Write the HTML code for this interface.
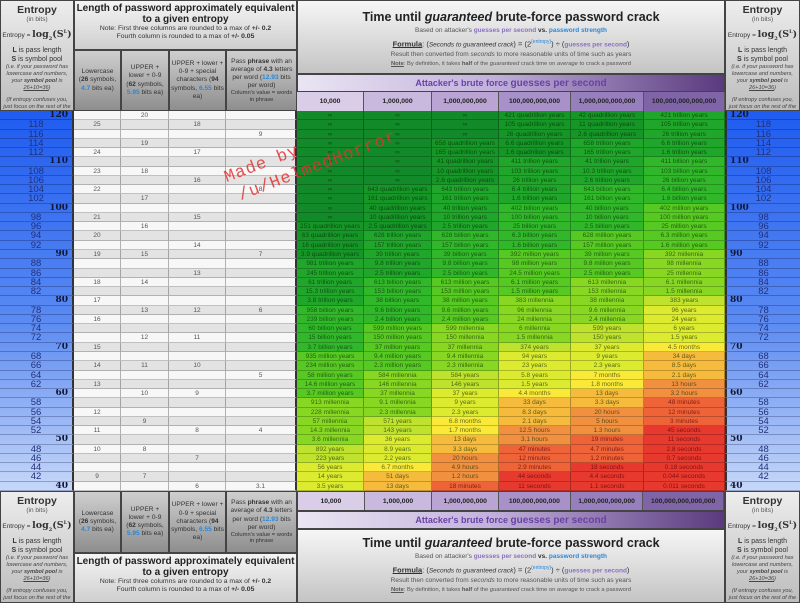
<!DOCTYPE html>
<html><head><meta charset="utf-8"><style>
*{margin:0;padding:0;box-sizing:border-box}
body{width:800px;height:603px;overflow:hidden;background:#555;font-family:"Liberation Sans","DejaVu Sans",sans-serif;position:relative;color:#222}
.abs{position:absolute;overflow:hidden}
#grid{position:absolute;left:0;top:111px;width:800px;height:380px;display:grid;grid-template-columns:74px 47px 48px 57px 71px 67px 68px 67px 72px 73px 81px 75px;grid-template-rows:repeat(41,1fr)}
#grid div{font-size:6.5px;text-align:center;line-height:9px;white-space:nowrap;overflow:hidden;border-right:1px solid rgba(0,0,0,.28);border-bottom:1px solid rgba(0,0,0,.22);color:rgba(0,30,0,.62)}
#grid .e{font-size:9.5px;color:#20307a;background:transparent;border-right:2px solid #333;border-bottom:1px solid rgba(0,0,40,.25);line-height:9px}
#grid .r{border-left:2px solid #333;border-right:none}
#grid .eb{font-weight:bold;text-align:right;padding-right:4px;color:#111838;font-family:"DejaVu Serif",serif;font-size:9px}
#grid .r.eb{text-align:left;padding-left:3px}
#grid .a{background:#f7f7f7;color:#555}
#grid .b{background:#e3e3e3;color:#555}
#grid .p4{border-right:2px solid #333}
.i{background:#138a2a}.q{background:#179628}.t{background:#20a62a}.bi{background:#31b82a}.m{background:#56c922}.k{background:#88d823}.y3{background:#bfe22e}.y{background:#dcea30}.mo{background:#fbe93a}.d{background:#f6bb3c}.h{background:#f19140}.mi{background:#ee6338}.s{background:#e8392f}
#grid .mi,#grid .s{color:rgba(90,0,0,.7)}
#lg,#rg{position:absolute;top:111px;width:74px;height:380px;background:linear-gradient(#1f5cf0,#5a8af2 55%,#c6d7f8)}
#lg{left:0}#rg{left:725px;width:75px}
.ent{background:linear-gradient(#ededed,#bdbdbd);text-align:center;color:#333;border:1px solid #444}
.ent h3{font-size:10.5px;margin-top:3px;line-height:12px}
.ent .s1{font-size:6.5px;color:#555;line-height:8px}
.ent .f{font-size:6.5px;margin-top:2px;line-height:12px}
.ent .f b{font-size:9.5px;font-family:"DejaVu Serif",serif}
.ent .l{font-size:7px;margin-top:1px;line-height:9px}
.ent .it{font-size:5.6px;font-style:italic;line-height:7px;color:#444;padding:0 1px}
.pt{background:linear-gradient(#f4f4f4,#cfcfcf);text-align:center;border:1px solid #444}
.pt h2{font-size:10px;line-height:10.5px;margin-top:3px;color:#222}
.pt p{font-size:6.8px;line-height:8px;color:#333}
.ph{background:linear-gradient(#cfcfcf,#8e8e8e);text-align:center;font-size:6.6px;line-height:8.2px;color:#333;border:1px solid #444;display:flex;align-items:center;justify-content:center;flex-direction:column;padding:0 1px}
.bl{color:#2a88d8;font-weight:bold}
.tt{background:linear-gradient(#f6f6f6,#c4c4c4);text-align:center;border:1px solid #444}
.tt h1{font-size:12.5px;color:#222;margin-top:9px;line-height:14px}
.tt p{font-size:6.5px;color:#555;line-height:8.5px}
.tt .fm{font-size:7.5px;color:#333;margin:1px 0;line-height:10px}
.pu{color:#8a70c0;font-weight:bold}
.bar{background:linear-gradient(90deg,#ebe5f3,#c2b2dc 45%,#5a3a7e);text-align:center;font-size:9px;font-weight:bold;color:#6a40a8;line-height:16px;border:1px solid #444}
.ch{display:flex}
.ch div{font-size:6.8px;font-weight:bold;text-align:center;line-height:19px;border-right:1px solid #555;color:#222;white-space:nowrap;overflow:hidden}
.wm{position:absolute;color:rgba(225,50,50,.85);font-family:"Liberation Mono",monospace;font-size:17px;transform:rotate(-21deg);transform-origin:left top;line-height:20px;letter-spacing:1px}
</style></head><body>

<div id="lg"></div><div id="rg"></div>
<div id="grid">
<div class="e eb">120</div><div class="a"></div><div class="a">20</div><div class="a"></div><div class="a p4"></div><div class="i">∞</div><div class="i">∞</div><div class="i">∞</div><div class="q">421 quadrillion years</div><div class="q">42 quadrillion years</div><div class="t">421 trillion years</div><div class="e r eb">120</div>
<div class="e">118</div><div class="b">25</div><div class="b"></div><div class="b">18</div><div class="b p4"></div><div class="i">∞</div><div class="i">∞</div><div class="i">∞</div><div class="q">105 quadrillion years</div><div class="q">11 quadrillion years</div><div class="t">105 trillion years</div><div class="e r">118</div>
<div class="e">116</div><div class="a"></div><div class="a"></div><div class="a"></div><div class="a p4">9</div><div class="i">∞</div><div class="i">∞</div><div class="i">∞</div><div class="q">26 quadrillion years</div><div class="q">2.6 quadrillion years</div><div class="t">26 trillion years</div><div class="e r">116</div>
<div class="e">114</div><div class="b"></div><div class="b">19</div><div class="b"></div><div class="b p4"></div><div class="i">∞</div><div class="i">∞</div><div class="q">658 quadrillion years</div><div class="q">6.6 quadrillion years</div><div class="t">658 trillion years</div><div class="t">6.6 trillion years</div><div class="e r">114</div>
<div class="e">112</div><div class="a">24</div><div class="a"></div><div class="a">17</div><div class="a p4"></div><div class="i">∞</div><div class="i">∞</div><div class="q">165 quadrillion years</div><div class="q">1.6 quadrillion years</div><div class="t">165 trillion years</div><div class="t">1.6 trillion years</div><div class="e r">112</div>
<div class="e eb">110</div><div class="b"></div><div class="b"></div><div class="b"></div><div class="b p4"></div><div class="i">∞</div><div class="i">∞</div><div class="q">41 quadrillion years</div><div class="t">411 trillion years</div><div class="t">41 trillion years</div><div class="bi">411 billion years</div><div class="e r eb">110</div>
<div class="e">108</div><div class="a">23</div><div class="a">18</div><div class="a"></div><div class="a p4"></div><div class="i">∞</div><div class="i">∞</div><div class="q">10 quadrillion years</div><div class="t">103 trillion years</div><div class="t">10.3 trillion years</div><div class="bi">103 billion years</div><div class="e r">108</div>
<div class="e">106</div><div class="b"></div><div class="b"></div><div class="b">16</div><div class="b p4"></div><div class="i">∞</div><div class="i">∞</div><div class="q">2.6 quadrillion years</div><div class="t">26 trillion years</div><div class="t">2.6 trillion years</div><div class="bi">26 billion years</div><div class="e r">106</div>
<div class="e">104</div><div class="a">22</div><div class="a"></div><div class="a"></div><div class="a p4">8</div><div class="i">∞</div><div class="q">643 quadrillion years</div><div class="t">643 trillion years</div><div class="t">6.4 trillion years</div><div class="bi">643 billion years</div><div class="bi">6.4 billion years</div><div class="e r">104</div>
<div class="e">102</div><div class="b"></div><div class="b">17</div><div class="b"></div><div class="b p4"></div><div class="i">∞</div><div class="q">161 quadrillion years</div><div class="t">161 trillion years</div><div class="t">1.6 trillion years</div><div class="bi">161 billion years</div><div class="bi">1.6 billion years</div><div class="e r">102</div>
<div class="e eb">100</div><div class="a"></div><div class="a"></div><div class="a"></div><div class="a p4"></div><div class="i">∞</div><div class="q">40 quadrillion years</div><div class="t">40 trillion years</div><div class="bi">402 billion years</div><div class="bi">40 billion years</div><div class="m">402 million years</div><div class="e r eb">100</div>
<div class="e">98</div><div class="b">21</div><div class="b"></div><div class="b">15</div><div class="b p4"></div><div class="i">∞</div><div class="q">10 quadrillion years</div><div class="t">10 trillion years</div><div class="bi">100 billion years</div><div class="bi">10 billion years</div><div class="m">100 million years</div><div class="e r">98</div>
<div class="e">96</div><div class="a"></div><div class="a">16</div><div class="a"></div><div class="a p4"></div><div class="q">251 quadrillion years</div><div class="q">2.5 quadrillion years</div><div class="t">2.5 trillion years</div><div class="bi">25 billion years</div><div class="bi">2.5 billion years</div><div class="m">25 million years</div><div class="e r">96</div>
<div class="e">94</div><div class="b">20</div><div class="b"></div><div class="b"></div><div class="b p4"></div><div class="q">63 quadrillion years</div><div class="t">628 trillion years</div><div class="bi">628 billion years</div><div class="bi">6.3 billion years</div><div class="m">628 million years</div><div class="m">6.3 million years</div><div class="e r">94</div>
<div class="e">92</div><div class="a"></div><div class="a"></div><div class="a">14</div><div class="a p4"></div><div class="q">16 quadrillion years</div><div class="t">157 trillion years</div><div class="bi">157 billion years</div><div class="bi">1.6 billion years</div><div class="m">157 million years</div><div class="m">1.6 million years</div><div class="e r">92</div>
<div class="e eb">90</div><div class="b">19</div><div class="b">15</div><div class="b"></div><div class="b p4">7</div><div class="q">3.9 quadrillion years</div><div class="t">39 trillion years</div><div class="bi">39 billion years</div><div class="m">392 million years</div><div class="m">39 million years</div><div class="k">392 millennia</div><div class="e r eb">90</div>
<div class="e">88</div><div class="a"></div><div class="a"></div><div class="a"></div><div class="a p4"></div><div class="t">981 trillion years</div><div class="t">9.8 trillion years</div><div class="bi">9.8 billion years</div><div class="m">98 million years</div><div class="m">9.8 million years</div><div class="k">98 millennia</div><div class="e r">88</div>
<div class="e">86</div><div class="b"></div><div class="b"></div><div class="b">13</div><div class="b p4"></div><div class="t">245 trillion years</div><div class="t">2.5 trillion years</div><div class="bi">2.5 billion years</div><div class="m">24.5 million years</div><div class="m">2.5 million years</div><div class="k">25 millennia</div><div class="e r">86</div>
<div class="e">84</div><div class="a">18</div><div class="a">14</div><div class="a"></div><div class="a p4"></div><div class="t">61 trillion years</div><div class="bi">613 billion years</div><div class="m">613 million years</div><div class="m">6.1 million years</div><div class="k">613 millennia</div><div class="k">6.1 millennia</div><div class="e r">84</div>
<div class="e">82</div><div class="b"></div><div class="b"></div><div class="b"></div><div class="b p4"></div><div class="t">15.3 trillion years</div><div class="bi">153 billion years</div><div class="m">153 million years</div><div class="m">1.5 million years</div><div class="k">153 millennia</div><div class="k">1.5 millennia</div><div class="e r">82</div>
<div class="e eb">80</div><div class="a">17</div><div class="a"></div><div class="a"></div><div class="a p4"></div><div class="t">3.8 trillion years</div><div class="bi">38 billion years</div><div class="m">38 million years</div><div class="k">383 millennia</div><div class="k">38 millennia</div><div class="y3">383 years</div><div class="e r eb">80</div>
<div class="e">78</div><div class="b"></div><div class="b">13</div><div class="b">12</div><div class="b p4">6</div><div class="bi">958 billion years</div><div class="bi">9.6 billion years</div><div class="m">9.6 million years</div><div class="k">96 millennia</div><div class="k">9.6 millennia</div><div class="y">96 years</div><div class="e r">78</div>
<div class="e">76</div><div class="a">16</div><div class="a"></div><div class="a"></div><div class="a p4"></div><div class="bi">239 billion years</div><div class="bi">2.4 billion years</div><div class="m">2.4 million years</div><div class="k">24 millennia</div><div class="k">2.4 millennia</div><div class="y">24 years</div><div class="e r">76</div>
<div class="e">74</div><div class="b"></div><div class="b"></div><div class="b"></div><div class="b p4"></div><div class="bi">60 billion years</div><div class="m">599 million years</div><div class="k">599 millennia</div><div class="k">6 millennia</div><div class="y3">599 years</div><div class="y">6 years</div><div class="e r">74</div>
<div class="e">72</div><div class="a"></div><div class="a">12</div><div class="a">11</div><div class="a p4"></div><div class="bi">15 billion years</div><div class="m">150 million years</div><div class="k">150 millennia</div><div class="k">1.5 millennia</div><div class="y3">150 years</div><div class="y">1.5 years</div><div class="e r">72</div>
<div class="e eb">70</div><div class="b">15</div><div class="b"></div><div class="b"></div><div class="b p4"></div><div class="bi">3.7 billion years</div><div class="m">37 million years</div><div class="k">37 millennia</div><div class="y3">374 years</div><div class="y">37 years</div><div class="mo">4.5 months</div><div class="e r eb">70</div>
<div class="e">68</div><div class="a"></div><div class="a"></div><div class="a"></div><div class="a p4"></div><div class="m">935 million years</div><div class="m">9.4 million years</div><div class="k">9.4 millennia</div><div class="y">94 years</div><div class="y">9 years</div><div class="d">34 days</div><div class="e r">68</div>
<div class="e">66</div><div class="b">14</div><div class="b">11</div><div class="b">10</div><div class="b p4"></div><div class="m">234 million years</div><div class="m">2.3 million years</div><div class="k">2.3 millennia</div><div class="y">23 years</div><div class="y">2.3 years</div><div class="d">8.5 days</div><div class="e r">66</div>
<div class="e">64</div><div class="a"></div><div class="a"></div><div class="a"></div><div class="a p4">5</div><div class="m">58 million years</div><div class="k">584 millennia</div><div class="y3">584 years</div><div class="y">5.8 years</div><div class="mo">7 months</div><div class="d">2.1 days</div><div class="e r">64</div>
<div class="e">62</div><div class="b">13</div><div class="b"></div><div class="b"></div><div class="b p4"></div><div class="m">14.6 million years</div><div class="k">146 millennia</div><div class="y3">146 years</div><div class="y">1.5 years</div><div class="mo">1.8 months</div><div class="h">13 hours</div><div class="e r">62</div>
<div class="e eb">60</div><div class="a"></div><div class="a">10</div><div class="a">9</div><div class="a p4"></div><div class="m">3.7 million years</div><div class="k">37 millennia</div><div class="y">37 years</div><div class="mo">4.4 months</div><div class="d">13 days</div><div class="h">3.2 hours</div><div class="e r eb">60</div>
<div class="e">58</div><div class="b"></div><div class="b"></div><div class="b"></div><div class="b p4"></div><div class="k">913 millennia</div><div class="k">9.1 millennia</div><div class="y">9 years</div><div class="d">33 days</div><div class="d">3.3 days</div><div class="mi">48 minutes</div><div class="e r">58</div>
<div class="e">56</div><div class="a">12</div><div class="a"></div><div class="a"></div><div class="a p4"></div><div class="k">228 millennia</div><div class="k">2.3 millennia</div><div class="y">2.3 years</div><div class="d">8.3 days</div><div class="h">20 hours</div><div class="mi">12 minutes</div><div class="e r">56</div>
<div class="e">54</div><div class="b"></div><div class="b">9</div><div class="b"></div><div class="b p4"></div><div class="k">57 millennia</div><div class="y3">571 years</div><div class="mo">6.8 months</div><div class="d">2.1 days</div><div class="h">5 hours</div><div class="mi">3 minutes</div><div class="e r">54</div>
<div class="e">52</div><div class="a">11</div><div class="a"></div><div class="a">8</div><div class="a p4">4</div><div class="k">14.3 millennia</div><div class="y3">143 years</div><div class="mo">1.7 months</div><div class="h">12.5 hours</div><div class="h">1.3 hours</div><div class="s">45 seconds</div><div class="e r">52</div>
<div class="e eb">50</div><div class="b"></div><div class="b"></div><div class="b"></div><div class="b p4"></div><div class="k">3.6 millennia</div><div class="y">36 years</div><div class="d">13 days</div><div class="h">3.1 hours</div><div class="mi">19 minutes</div><div class="s">11 seconds</div><div class="e r eb">50</div>
<div class="e">48</div><div class="a">10</div><div class="a">8</div><div class="a"></div><div class="a p4"></div><div class="y3">892 years</div><div class="y">8.9 years</div><div class="d">3.3 days</div><div class="mi">47 minutes</div><div class="mi">4.7 minutes</div><div class="s">2.8 seconds</div><div class="e r">48</div>
<div class="e">46</div><div class="b"></div><div class="b"></div><div class="b">7</div><div class="b p4"></div><div class="y3">223 years</div><div class="y">2.2 years</div><div class="h">20 hours</div><div class="mi">12 minutes</div><div class="mi">1.2 minutes</div><div class="s">0.7 seconds</div><div class="e r">46</div>
<div class="e">44</div><div class="a"></div><div class="a"></div><div class="a"></div><div class="a p4"></div><div class="y">56 years</div><div class="mo">6.7 months</div><div class="h">4.9 hours</div><div class="mi">2.9 minutes</div><div class="s">18 seconds</div><div class="s">0.18 seconds</div><div class="e r">44</div>
<div class="e">42</div><div class="b">9</div><div class="b">7</div><div class="b"></div><div class="b p4"></div><div class="y">14 years</div><div class="d">51 days</div><div class="h">1.2 hours</div><div class="s">44 seconds</div><div class="s">4.4 seconds</div><div class="s">0.044 seconds</div><div class="e r">42</div>
<div class="e eb">40</div><div class="a"></div><div class="a"></div><div class="a">6</div><div class="a p4">3.1</div><div class="y">3.5 years</div><div class="d">13 days</div><div class="mi">18 minutes</div><div class="s">11 seconds</div><div class="s">1.1 seconds</div><div class="s">0.011 seconds</div><div class="e r eb">40</div>
</div>

<!-- TOP -->
<div class="abs ent" style="left:0;top:0;width:74px;height:111px">
<h3>Entropy</h3><div class="s1">(in bits)</div>
<div class="f">Entropy = <b>log<sub style="font-size:5px">2</sub>(S<sup style="font-size:5px">L</sup>)</b></div>
<div class="l"><b>L</b> is pass length<br><b>S</b> is symbol pool</div>
<div class="it">(i.e. if your password has lowercase and numbers, your <b>symbol pool</b> is <u>26+10=36</u>)</div>
<div class="it" style="margin-top:5px">(If entropy confuses you, just focus on the rest of the chart)</div>
</div>
<div class="abs pt" style="left:74px;top:0;width:223px;height:50px">
<h2>Length of password approximately equivalent to a given entropy</h2>
<p>Note: First three columns are rounded to a max of <b>+/- 0.2</b><br>Fourth column is rounded to a max of <b>+/- 0.05</b></p>
</div>
<div class="abs ph" style="left:74px;top:50px;width:47px;height:61px"><span>Lowercase (<b>26</b> symbols, <span class="bl">4.7</span> bits ea)</span></div>
<div class="abs ph" style="left:121px;top:50px;width:48px;height:61px"><span>UPPER + lower + 0-9 (<b>62</b> symbols, <span class="bl">5.95</span> bits ea)</span></div>
<div class="abs ph" style="left:169px;top:50px;width:57px;height:61px"><span>UPPER + lower + 0-9 + special characters (<b>94</b> symbols, <span class="bl">6.55</span> bits ea)</span></div>
<div class="abs ph" style="left:226px;top:50px;width:71px;height:61px"><span>Pass <b>phrase</b> with an average of <b>4.3</b> letters per word (<span class="bl">12.93</span> bits per word)</span><span style="font-size:5.8px;line-height:6.5px">Column's value = words in phrase</span></div>
<div class="abs tt" style="left:297px;top:0;width:428px;height:74px">
<h1>Time until <i>guaranteed</i> brute-force password crack</h1>
<p style="margin-top:3px">Based on attacker's <span class="pu">guesses per second</span> <b style="color:#333">vs.</b> <span class="bl">password strength</span></p>
<div class="fm"><b><u>Formula</u></b>: (<i style="font-size:6.5px">Seconds to guaranteed crack</i>) = (2<sup style="font-size:5px;color:#2a88d8">(entropy)</sup>) ÷ (<span class="pu" style="font-size:6.5px">guesses per second</span>)</div>
<p>Result then converted from <i>seconds</i> to more reasonable units of time such as years</p>
<p style="font-size:5.8px"><b><u>Note</u></b>: By definition, it takes <b>half</b> of the <i>guaranteed</i> crack time on <i>average</i> to crack a password</p>
</div>
<div class="abs bar" style="left:297px;top:74px;width:428px;height:18px">Attacker's brute force <span style="font-size:10px">guesses per second</span></div>
<div class="abs ch" style="left:297px;top:92px;width:428px;height:19px">
<div style="width:67px;background:#d9cde8">10,000</div><div style="width:68px;background:#c9b9df">1,000,000</div><div style="width:67px;background:#b9a4d4">1,000,000,000</div><div style="width:72px;background:#a891c9">100,000,000,000</div><div style="width:73px;background:#977fbd">1,000,000,000,000</div><div style="width:81px;background:#7f65a8">100,000,000,000,000</div></div>
<div class="abs ent" style="left:725px;top:0;width:75px;height:111px">
<h3>Entropy</h3><div class="s1">(in bits)</div>
<div class="f">Entropy = <b>log<sub style="font-size:5px">2</sub>(S<sup style="font-size:5px">L</sup>)</b></div>
<div class="l"><b>L</b> is pass length<br><b>S</b> is symbol pool</div>
<div class="it">(i.e. if your password has lowercase and numbers, your <b>symbol pool</b> is <u>26+10=36</u>)</div>
<div class="it" style="margin-top:5px">(If entropy confuses you, just focus on the rest of the chart)</div>
</div>

<!-- BOTTOM -->
<div class="abs ent" style="left:0;top:491px;width:74px;height:112px">
<h3>Entropy</h3><div class="s1">(in bits)</div>
<div class="f">Entropy = <b>log<sub style="font-size:5px">2</sub>(S<sup style="font-size:5px">L</sup>)</b></div>
<div class="l"><b>L</b> is pass length<br><b>S</b> is symbol pool</div>
<div class="it">(i.e. if your password has lowercase and numbers, your <b>symbol pool</b> is <u>26+10=36</u>)</div>
<div class="it" style="margin-top:5px">(If entropy confuses you, just focus on the rest of the chart)</div>
</div>
<div class="abs ph" style="left:74px;top:491px;width:47px;height:62px"><span>Lowercase (<b>26</b> symbols, <span class="bl">4.7</span> bits ea)</span></div>
<div class="abs ph" style="left:121px;top:491px;width:48px;height:62px"><span>UPPER + lower + 0-9 (<b>62</b> symbols, <span class="bl">5.95</span> bits ea)</span></div>
<div class="abs ph" style="left:169px;top:491px;width:57px;height:62px"><span>UPPER + lower + 0-9 + special characters (<b>94</b> symbols, <span class="bl">6.55</span> bits ea)</span></div>
<div class="abs ph" style="left:226px;top:491px;width:71px;height:62px"><span>Pass <b>phrase</b> with an average of <b>4.3</b> letters per word (<span class="bl">12.93</span> bits per word)</span><span style="font-size:5.8px;line-height:6.5px">Column's value = words in phrase</span></div>
<div class="abs pt" style="left:74px;top:553px;width:223px;height:50px">
<h2>Length of password approximately equivalent to a given entropy</h2>
<p>Note: First three columns are rounded to a max of <b>+/- 0.2</b><br>Fourth column is rounded to a max of <b>+/- 0.05</b></p>
</div>
<div class="abs ch" style="left:297px;top:491px;width:428px;height:20px;border:1px solid #444">
<div style="width:67px;background:#d9cde8">10,000</div><div style="width:68px;background:#c9b9df">1,000,000</div><div style="width:67px;background:#b9a4d4">1,000,000,000</div><div style="width:72px;background:#a891c9">100,000,000,000</div><div style="width:73px;background:#977fbd">1,000,000,000,000</div><div style="width:81px;background:#7f65a8">100,000,000,000,000</div></div>
<div class="abs bar" style="left:297px;top:511px;width:428px;height:18px">Attacker's brute force <span style="font-size:10px">guesses per second</span></div>
<div class="abs tt" style="left:297px;top:529px;width:428px;height:74px">
<h1 style="margin-top:6px">Time until <i>guaranteed</i> brute-force password crack</h1>
<p style="margin-top:3px">Based on attacker's <span class="pu">guesses per second</span> <b style="color:#333">vs.</b> <span class="bl">password strength</span></p>
<div class="fm"><b><u>Formula</u></b>: (<i style="font-size:6.5px">Seconds to guaranteed crack</i>) = (2<sup style="font-size:5px;color:#2a88d8">(entropy)</sup>) ÷ (<span class="pu" style="font-size:6.5px">guesses per second</span>)</div>
<p>Result then converted from <i>seconds</i> to more reasonable units of time such as years</p>
<p style="font-size:5.8px"><b><u>Note</u></b>: By definition, it takes <b>half</b> of the <i>guaranteed</i> crack time on <i>average</i> to crack a password</p>
</div>
<div class="abs ent" style="left:725px;top:491px;width:75px;height:112px">
<h3>Entropy</h3><div class="s1">(in bits)</div>
<div class="f">Entropy = <b>log<sub style="font-size:5px">2</sub>(S<sup style="font-size:5px">L</sup>)</b></div>
<div class="l"><b>L</b> is pass length<br><b>S</b> is symbol pool</div>
<div class="it">(i.e. if your password has lowercase and numbers, your <b>symbol pool</b> is <u>26+10=36</u>)</div>
<div class="it" style="margin-top:5px">(If entropy confuses you, just focus on the rest of the chart)</div>
</div>

<div class="wm" style="left:222px;top:170px">Made by</div>
<div class="wm" style="left:236px;top:188px">/u/HelmedHorror</div>
</body></html>
